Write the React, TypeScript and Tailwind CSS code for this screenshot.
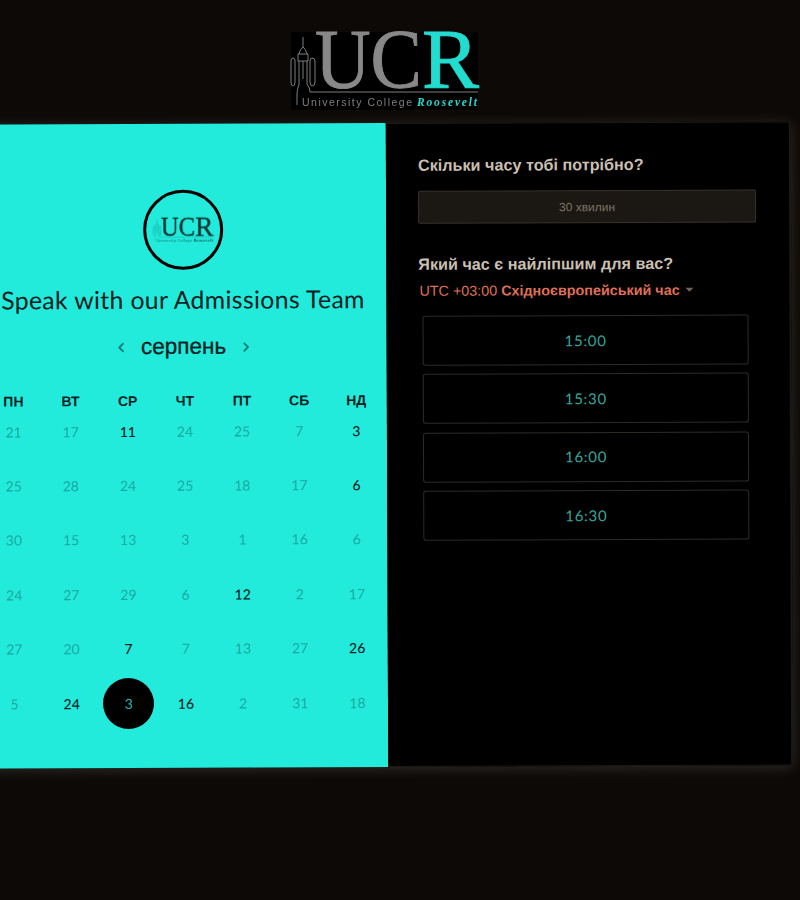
import React from 'react';
import { ChevronLeft, ChevronRight } from 'lucide-react';

type Day = { n: number; on?: boolean; picked?: boolean };

const weekDays = ['ПН', 'ВТ', 'СР', 'ЧТ', 'ПТ', 'СБ', 'НД'];

const weeks: Day[][] = [
    [{ n: 21 }, { n: 17 }, { n: 11, on: true }, { n: 24 }, { n: 25 }, { n: 7 }, { n: 3, on: true }],
    [{ n: 25 }, { n: 28 }, { n: 24 }, { n: 25 }, { n: 18 }, { n: 17 }, { n: 6, on: true }],
    [{ n: 30 }, { n: 15 }, { n: 13 }, { n: 3 }, { n: 1 }, { n: 16 }, { n: 6 }],
    [{ n: 24 }, { n: 27 }, { n: 29 }, { n: 6 }, { n: 12, on: true }, { n: 2 }, { n: 17 }],
    [{ n: 27 }, { n: 20 }, { n: 7, on: true }, { n: 7 }, { n: 13 }, { n: 27 }, { n: 26, on: true }],
    [{ n: 5 }, { n: 24, on: true }, { n: 3, picked: true }, { n: 16, on: true }, { n: 2 }, { n: 31 }, { n: 18 }],
];

const slots = ['15:00', '15:30', '16:00', '16:30'];

// UCR wordmark with the little tower on the left
const Logo = ({ uc, r, line, small }: { uc: string; r: string; line: string; small: string }) => (
    <svg viewBox="0 0 187 78" className="w-full h-full overflow-visible">
        <g fill="none" stroke={line} strokeWidth="0.9">
            <path d="M12 5 V15 M8 22 Q9 17 12 15 Q15 17 16 22 M7 22 H17 V29 H7 Z" />
            <path d="M2 26 Q0 26 0 29 V50 Q0 54 2 54 Q4 54 4 50 V29 Q4 26 2 26 Z" />
            <path d="M21 26 Q19 26 19 29 V50 Q19 54 21 54 Q24 54 24 50 V29 Q24 26 21 26 Z" />
            <path d="M8 29 V52 M12 29 V47 M16 29 V52 M8 52 Q6 58 6 62 V73 M16 52 Q19 56 19 60 H187" />
        </g>
        <text x="24" y="56" fontFamily="'Liberation Serif', serif" fontSize="84" textLength="107" lengthAdjust="spacingAndGlyphs" stroke={uc} strokeWidth="0.9" fill={uc}>UC</text>
        <text x="131" y="56" fontFamily="'Liberation Serif', serif" fontSize="84" textLength="57" lengthAdjust="spacingAndGlyphs" stroke={r} strokeWidth="0.9" fill={r}>R</text>
        <text x="11" y="74" fontFamily="'Liberation Sans', sans-serif" fontSize="10.5" textLength="110" fill={small}>University College</text>
        <text x="126" y="74" fontFamily="'Liberation Serif', serif" fontStyle="italic" fontWeight="bold" fontSize="11.5" textLength="60" fill={r}>Roosevelt</text>
    </svg>
);

const DayCell = ({ day }: { day: Day }) => {
    if (day.picked) {
        return (
            <div className="flex justify-center items-center h-[54.4px]">
                <div className="w-[51px] h-[51px] shrink-0 rounded-full bg-black text-[#25b3ab] flex items-center justify-center">{day.n}</div>
            </div>
        );
    }
    return (
        <div className={`flex justify-center items-center h-[54.4px] ${day.on ? 'text-[#04211f] font-medium' : 'text-[#17aca2]'}`}>
            {day.n}
        </div>
    );
};

export default function App() {
    return (
        <div className="min-h-[900px] h-[900px] overflow-hidden bg-[#0c0906] pt-[32px]">
            <div className="w-[813px] ml-[-21px]">
                <div className="w-[187px] h-[78px] ml-[312px] bg-black blur-[0.4px]">
                    <Logo uc="#888888" r="#22dcd0" line="#8a8a8a" small="#7f7f7f" />
                </div>

                <div className="mt-[13px] h-[644px] flex rotate-[-0.22deg] shadow-[0_2px_14px_rgba(255,255,255,0.14)]">
                    {/* Left: calendar */}
                    <div className="w-[408px] shrink-0 bg-[#23ebdc] flex flex-col items-center pt-[66px] font-['Lato',sans-serif]">
                        <div className="ml-[2px] w-[80px] h-[80px] rounded-full border-[3px] border-black flex items-center justify-center">
                            <div className="w-[60px] h-[27px] blur-[0.3px]">
                                <Logo uc="#06302e" r="#06302e" line="#0f7f78" small="#0b5f5a" />
                            </div>
                        </div>

                        <h1 className="ml-[1px] mt-[13px] text-[24.8px] leading-[34px] tracking-[0.35px] text-[#06201f] font-normal whitespace-nowrap">
                            Speak with our Admissions Team
                        </h1>

                        <div className="ml-[2px] mt-[14px] flex items-center gap-[12px] h-[32px] font-['Liberation_Sans',sans-serif]">
                            <ChevronLeft size={15} strokeWidth={3} className="text-[#137f78]" />
                            <span className="text-[22.5px] text-[#06201f] [-webkit-text-stroke:0.3px_#06201f]">серпень</span>
                            <ChevronRight size={15} strokeWidth={3} className="text-[#137f78]" />
                        </div>

                        <div className="ml-[4px] mt-[28px] w-[400px] grid grid-cols-7 text-[14px] font-bold text-[#06201f] font-['Liberation_Sans',sans-serif]">
                            {weekDays.map(d => (
                                <div key={d} className="text-center leading-[20px]">{d}</div>
                            ))}
                        </div>

                        <div className="ml-[4px] mt-[-7px] w-[400px] grid grid-cols-7 text-[14px]">
                            {weeks.flat().map((day, i) => (
                                <DayCell key={i} day={day} />
                            ))}
                        </div>
                    </div>

                    {/* Right: duration and times */}
                    <div className="flex-1 bg-black border-r-2 border-t border-b border-[#1d1a16] pl-[32px] pr-[33px] pt-[31px] font-['Liberation_Sans',sans-serif]">
                        <h2 className="text-[16.2px] leading-[20px] font-bold text-[#c9bfb2]">Скільки часу тобі потрібно?</h2>
                        <div className="mt-[16px] h-[33px] rounded-[2px] bg-[#1b1712] border border-[#37322b] flex items-center justify-center text-[12px] text-[#7d7468]">
                            30 хвилин
                        </div>

                        <h2 className="mt-[30px] text-[16.2px] leading-[20px] font-bold text-[#c9bfb2]">Який час є найліпшим для вас?</h2>
                        <div className="mt-[7px] ml-[1px] flex items-center text-[14.35px] leading-[20px] text-[#df6f58]">
                            <span>UTC +03:00</span>
                            <span className="ml-[4px] font-bold">Східноєвропейський час</span>
                            <span className="ml-[6px] w-0 h-0 border-x-[4px] border-x-transparent border-t-[4px] border-t-[#6f675c]" />
                        </div>

                        <div className="mt-[15px] ml-[4px] mr-[8px] flex flex-col gap-[8.3px]">
                            {slots.map(time => (
                                <div key={time} className="h-[50px] rounded-[3px] border border-[#2e2b27] flex items-center justify-center text-[15px] tracking-[0.7px] text-[#36a69e] font-['Lato',sans-serif]">
                                    {time}
                                </div>
                            ))}
                        </div>
                    </div>
                </div>
            </div>
        </div>
    );
}
